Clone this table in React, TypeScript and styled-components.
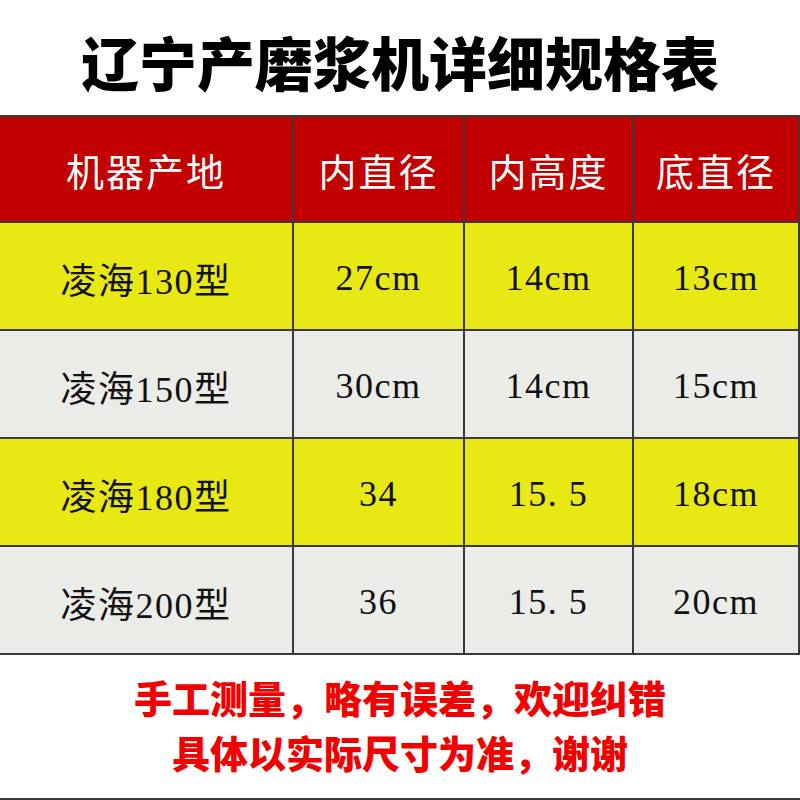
import styled, { createGlobalStyle } from "styled-components";

const GlobalStyle = createGlobalStyle`
  html, body {
    margin: 0;
    padding: 0;
    background: #ffffff;
  }
`;

// 整頁
const Page = styled.div`
  width: 800px;
  height: 800px;
  display: flex;
  flex-direction: column;
  background: #ffffff;
  overflow: hidden;
  border-bottom: 2px solid #3a3a3a;
  box-sizing: border-box;
`;

// 標題
const Title = styled.h1`
  margin: 0;
  height: 115px;
  display: flex;
  align-items: center;
  justify-content: center;
  padding-top: 6px;
  box-sizing: border-box;
  font-family: "Noto Sans CJK SC", sans-serif;
  font-weight: 900;
  font-size: 58px;
  color: #000000;
`;

// 表格
const Table = styled.div`
  display: grid;
  grid-template-columns: 292px 169px 167px 1fr;
  grid-template-rows: 104px repeat(4, 106px);
  gap: 2px;
  background: #3a3a3a;
  border-top: 2px solid #3a3a3a;
  border-bottom: 2px solid #3a3a3a;
  border-right: 2px solid #3a3a3a;
  width: 800px;
  box-sizing: border-box;
`;

type Tone = "head" | "yellow" | "gray";

const tones: Record<Tone, { bg: string; fg: string; size: string }> = {
  head: { bg: "#c20000", fg: "#ffffff", size: "38px" },
  yellow: { bg: "#e8e815", fg: "#111111", size: "36px" },
  gray: { bg: "#ebebe8", fg: "#111111", size: "36px" },
};

const Cell = styled.div<{ $tone: Tone }>`
  display: flex;
  align-items: center;
  justify-content: center;
  background: ${(p) => tones[p.$tone].bg};
  color: ${(p) => tones[p.$tone].fg};
  font-family: "Liberation Serif", "Noto Sans CJK SC", serif;
  font-size: ${(p) => tones[p.$tone].size};
  letter-spacing: ${(p) => (p.$tone === "head" ? "2px" : "1.5px")};
  padding-top: ${(p) => (p.$tone === "head" ? "0" : "4px")};
  box-sizing: border-box;
`;

// 底部提示
const Notes = styled.div`
  flex: 1;
  display: flex;
  flex-direction: column;
  align-items: center;
  justify-content: center;
  gap: 13px;
  padding-bottom: 4px;
`;

const Note = styled.p`
  margin: 0;
  font-family: "Noto Sans CJK SC", sans-serif;
  font-weight: 900;
  font-size: 38px;
  line-height: 42px;
  color: #f20000;
`;

const header = ["机器产地", "内直径", "内高度", "底直径"];

const rows: string[][] = [
  ["凌海130型", "27cm", "14cm", "13cm"],
  ["凌海150型", "30cm", "14cm", "15cm"],
  ["凌海180型", "34", "15. 5", "18cm"],
  ["凌海200型", "36", "15. 5", "20cm"],
];

export default function App() {
  return (
    <>
      <GlobalStyle />
      <Page>
        <Title>辽宁产磨浆机详细规格表</Title>
        <Table>
          {header.map((h) => (
            <Cell key={h} $tone="head">
              {h}
            </Cell>
          ))}
          {rows.map((r, i) =>
            r.map((v, j) => (
              <Cell key={`${i}-${j}`} $tone={i % 2 === 0 ? "yellow" : "gray"}>
                {v}
              </Cell>
            ))
          )}
        </Table>
        <Notes>
          <Note>手工测量，略有误差，欢迎纠错</Note>
          <Note>具体以实际尺寸为准，谢谢</Note>
        </Notes>
      </Page>
    </>
  );
}
